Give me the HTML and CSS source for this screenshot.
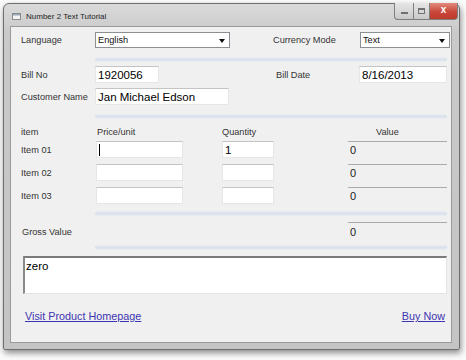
FILE: index.html
```html
<!DOCTYPE html>
<html lang="en">
<head>
    <meta charset="UTF-8">
    <title>Number 2 Text Tutorial</title>
    <link rel="stylesheet" href="styles.css">
</head>
<body>
    <div class="window">
        <!-- Title bar -->
        <div class="titlebar">
            <div class="title">
                <svg class="app-icon" width="9" height="7" viewBox="0 0 9 7">
                    <rect x="0.5" y="0.5" width="8" height="6" fill="#f4f4f4" stroke="#8a8a8a"/>
                    <rect x="1" y="1" width="7" height="1.5" fill="#9aa6b8"/>
                </svg>
                <span>Number 2 Text Tutorial</span>
            </div>
            <div class="caption-btns">
                <div class="cap-btn cap-min"><span></span></div>
                <div class="cap-btn cap-max"><span></span></div>
                <div class="cap-btn cap-close">x</div>
            </div>
        </div>

        <!-- Client area -->
        <div class="client">
            <div class="row row-top">
                <label class="lbl">Language</label>
                <div class="combo combo-lang">English<span class="arrow"></span></div>
                <label class="lbl lbl-currency">Currency Mode</label>
                <div class="combo combo-cur">Text<span class="arrow"></span></div>
            </div>
            <div class="sep sep-1"></div>

            <div class="row row-field">
                <label class="lbl">Bill No</label>
                <div class="field field-bill">1920056</div>
                <label class="lbl lbl-date">Bill Date</label>
                <div class="field field-date">8/16/2013</div>
            </div>
            <div class="row row-field row-cust">
                <label class="lbl">Customer Name</label>
                <div class="field field-cust">Jan Michael Edson</div>
            </div>
            <div class="sep sep-2"></div>

            <div class="row row-head">
                <span class="h-item">item</span>
                <span class="h-price">Price/unit</span>
                <span class="h-qty">Quantity</span>
                <span class="h-value">Value</span>
            </div>

            <div class="items">
                <div class="row row-item">
                    <label class="lbl-item">Item 01</label>
                    <div class="field price"><span class="caret"></span></div>
                    <div class="field qty">1</div>
                    <div class="value">0</div>
                </div>
                <div class="row row-item">
                    <label class="lbl-item">Item 02</label>
                    <div class="field price"></div>
                    <div class="field qty"></div>
                    <div class="value">0</div>
                </div>
                <div class="row row-item">
                    <label class="lbl-item">Item 03</label>
                    <div class="field price"></div>
                    <div class="field qty"></div>
                    <div class="value">0</div>
                </div>
            </div>
            <div class="sep sep-3"></div>

            <div class="row row-gross">
                <label class="lbl lbl-gross">Gross Value</label>
                <div class="value">0</div>
            </div>
            <div class="sep sep-4"></div>

            <div class="memo">zero</div>

            <div class="row row-links">
                <a href="#" class="link">Visit Product Homepage</a>
                <a href="#" class="link">Buy Now</a>
            </div>
        </div>
    </div>
</body>
</html>
```

FILE: styles.css
```css
* {
    box-sizing: border-box;
}
body {
    margin: 0;
    width: 466px;
    height: 360px;
    background: #fbfbfb;
    font-family: 'Liberation Sans', Arial, sans-serif;
    color: #333;
    overflow: hidden;
}
.window {
    margin: 3px 0 0 3px;
    width: 457px;
    height: 347px;
    border: 1px solid #6f6f6f;
    border-radius: 6px 6px 2px 2px;
    background: linear-gradient(#dadada, #c9c9c9 30px, #c4c4c4);
    box-shadow: 1px 3px 6px rgba(0, 0, 0, 0.45);
    display: flex;
    flex-direction: column;
}
/* Title bar */
.titlebar {
    height: 22px;
    display: flex;
    justify-content: space-between;
    padding: 0 1px 0 8px;
}
.title {
    display: flex;
    align-items: center;
    gap: 5px;
    font-size: 8px;
    color: #1e1e1e;
    padding-top: 2px;
}
.caption-btns {
    display: flex;
    margin-top: -1px;
    height: 17px;
}
.cap-btn {
    height: 17px;
    border: 1px solid #7e7e7e;
    border-top: none;
    display: flex;
    align-items: center;
    justify-content: center;
}
.cap-min {
    width: 19px;
    border-right: none;
    border-radius: 0 0 0 4px;
    background: linear-gradient(#e6e6e6, #c9c9c9);
}
.cap-min span {
    width: 7px;
    height: 2px;
    margin-top: 4px;
    background: #707070;
}
.cap-max {
    width: 17px;
    background: linear-gradient(#e6e6e6, #c9c9c9);
}
.cap-max span {
    width: 7px;
    height: 6px;
    border: 1px solid #707070;
    border-top-width: 2px;
}
.cap-close {
    width: 28px;
    border-left: none;
    border-radius: 0 0 4px 0;
    background: linear-gradient(#e48a7e, #c8483a 55%, #c0392d);
    color: #fff;
    font-size: 10px;
    font-weight: bold;
    line-height: 1;
    padding-bottom: 2px;
}
/* Client area */
.client {
    flex: 1;
    margin: 0 7px 6px 6px;
    background: #f0f0f0;
    border: 1px solid #9a9a9a;
    padding: 5px 0 0 10px;
    display: flex;
    flex-direction: column;
}
.row {
    display: flex;
    align-items: center;
}
.lbl, .lbl-item {
    font-size: 9.2px;
    color: #333;
    flex: none;
}
.lbl {
    width: 74px;
}
.lbl-item {
    width: 75px;
}
.row-top {
    height: 16px;
}
.combo {
    position: relative;
    height: 16px;
    background: #fff;
    border: 1px solid #8c8f94;
    font-size: 9.2px;
    color: #111;
    padding-left: 2px;
    display: flex;
    align-items: center;
}
.combo-lang {
    width: 135px;
}
.lbl-currency {
    margin-left: 43px;
    width: 87px;
}
.combo-cur {
    width: 90px;
}
.arrow {
    position: absolute;
    right: 4px;
    top: 6px;
    border-left: 3px solid transparent;
    border-right: 3px solid transparent;
    border-top: 4px solid #111;
}
.sep {
    margin-left: 74px;
    width: 352px;
    height: 5px;
    background: linear-gradient(rgba(215, 224, 236, 0.2), #d9e1ec 50%, rgba(215, 224, 236, 0.2));
    border-radius: 3px;
}
.sep-1 {
    margin-top: 9px;
}
.row-field {
    height: 17px;
    margin-top: 4px;
}
.row-cust {
    margin-top: 5px;
}
.field {
    height: 17px;
    background: #fff;
    border: 1px solid #e6e6e6;
    border-top-color: #c4c4c4;
    font-size: 11.5px;
    color: #000;
    padding-left: 2px;
    display: flex;
    align-items: center;
    flex: none;
}
.field-bill {
    width: 64px;
}
.lbl-date {
    margin-left: 117px;
    width: 83px;
}
.field-date {
    width: 88px;
}
.field-cust {
    width: 134px;
}
.sep-2 {
    margin-top: 9px;
}
.row-head {
    margin-top: 7px;
    height: 11px;
    font-size: 9.2px;
}
.h-item {
    width: 76px;
}
.h-price {
    width: 125px;
}
.h-qty {
    width: 126px;
}
.h-value {
    padding-left: 28px;
}
.items {
    margin-top: 4px;
    display: flex;
    flex-direction: column;
    gap: 6px;
}
.row-item {
    height: 17px;
}
.price {
    width: 87px;
}
.caret {
    width: 1px;
    height: 12px;
    background: #000;
}
.qty {
    width: 52px;
    margin-left: 39px;
}
.value {
    margin-left: 74px;
    width: 99px;
    height: 17px;
    border-top: 1px solid #ababab;
    font-size: 11px;
    color: #222;
    padding: 2px 0 0 2px;
}
.sep-3 {
    margin-top: 7px;
}
.row-gross {
    margin-top: 6px;
    height: 17px;
    align-items: stretch;
}
.lbl-gross {
    padding: 5px 0 0 1px;
    width: 327px;
}
.row-gross .value {
    margin-left: 0;
    padding-top: 3px;
}
.sep-4 {
    margin-top: 6px;
}
.memo {
    margin: 6px 0 0 2px;
    width: 424px;
    height: 38px;
    background: #fff;
    border: 1px solid #e4e4e4;
    border-top: 2px solid #7a7a7a;
    border-left: 2px solid #8a8a8a;
    font-size: 11.5px;
    color: #000;
    padding: 2px 0 0 1px;
}
.row-links {
    margin: 16px 0 0 4px;
    width: 420px;
    justify-content: space-between;
}
.link {
    font-size: 10.8px;
    color: #3d35b0;
    text-decoration: underline;
}
```
